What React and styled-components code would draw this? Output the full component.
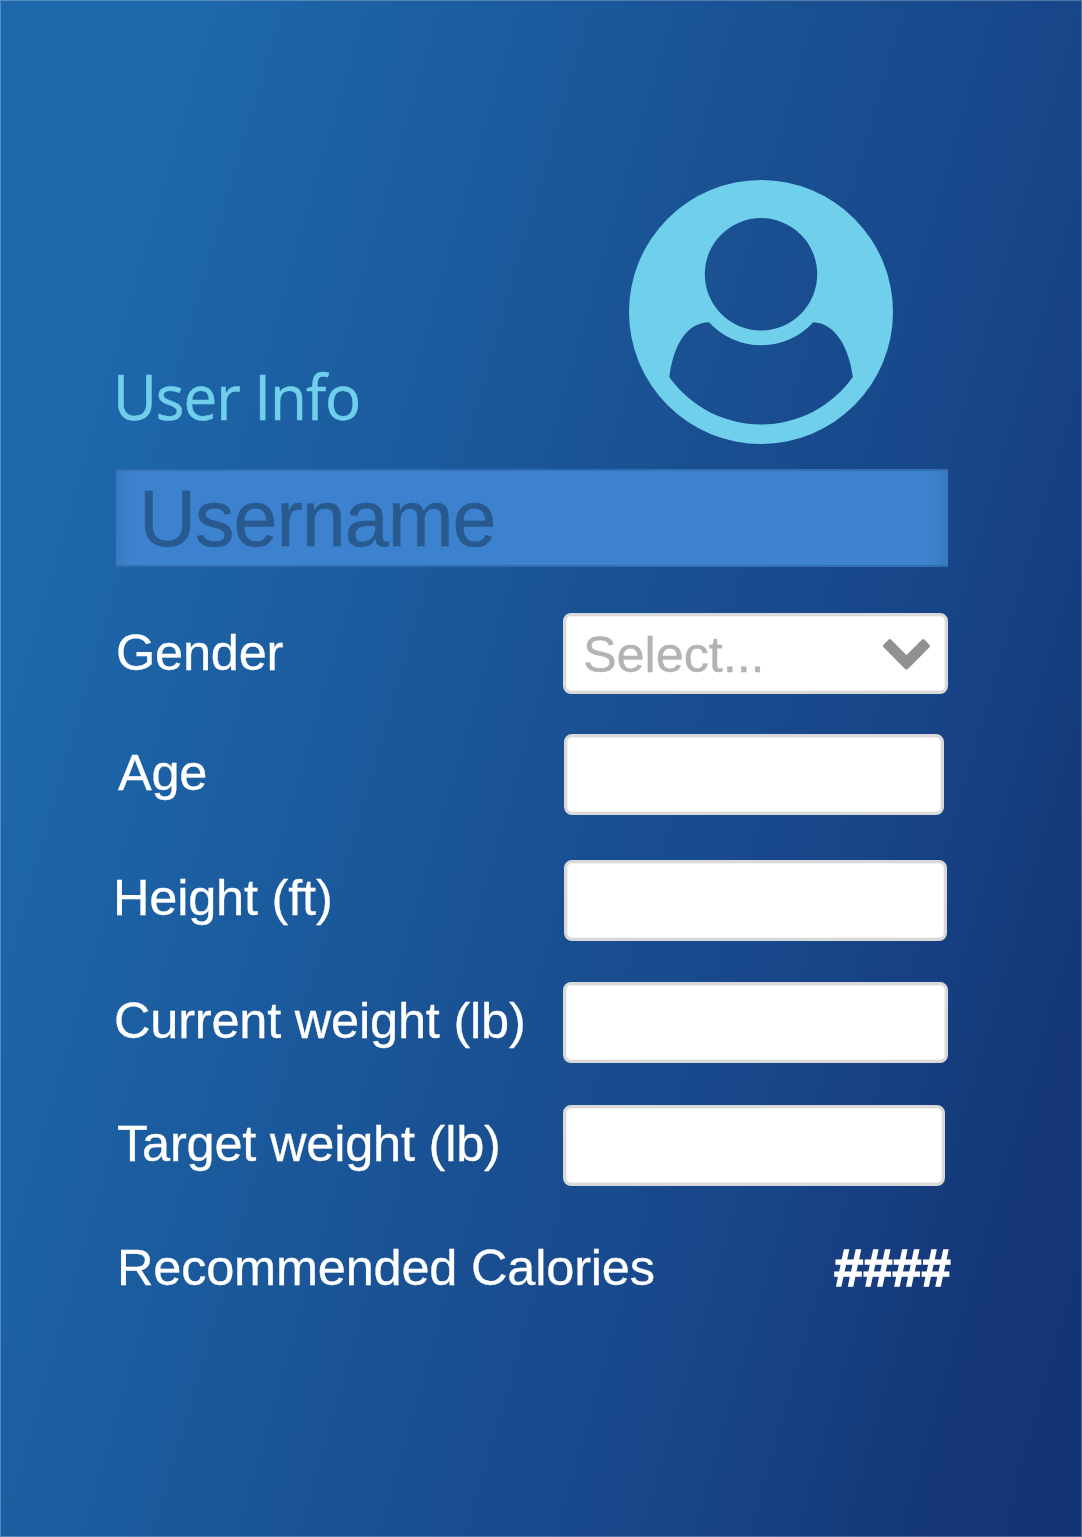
import React from "react";
import styled, { createGlobalStyle } from "styled-components";

const GlobalStyle = createGlobalStyle`
  *, *::before, *::after { box-sizing: border-box; }
  body { margin: 0; }
`;

const Page = styled.main`
  width: 1082px;
  height: 1537px;
  padding: 179px 0 0 115px;
  border: 1px solid rgba(255, 255, 255, 0.25);
  background: linear-gradient(106deg, #1d69ac 0%, #1d69ac 11%, #194f91 55%, #174588 73%, #143676 90%, #143575 100%) border-box;
  font-family: "Liberation Sans", Arial, sans-serif;
  color: #fff;
  overflow: hidden;
`;

const Header = styled.header`
  display: flex;
  align-items: flex-end;
  justify-content: space-between;
  width: 777px;
  height: 264px;
`;

const Title = styled.h1`
  margin: 0 0 8px -3px;
  font: 400 63px/80px "Open Sans", "Noto Sans", sans-serif;
  letter-spacing: -1.1px;
  transform: scaleX(0.955);
  transform-origin: left center;
  -webkit-text-stroke: 0.5px #70cfeb;
  color: #70cfeb;
  white-space: nowrap;
`;

const Username = styled.div`
  display: flex;
  align-items: center;
  width: 832px;
  height: 98px;
  margin-top: 25px;
  padding: 1px 0 0 23px;
  border: solid #326eb2;
  border-width: 2px 0;
  background:
    linear-gradient(90deg, #3a78bc, #3c82ce 14px, #3c82ce calc(100% - 20px), #3b80c8 calc(100% - 12px), #3a78bc);
  font-size: 79px;
  line-height: 93px;
  letter-spacing: -1px;
  -webkit-text-stroke: 0.5px #285a90;
  color: #285a90;
`;

const Row = styled.div`
  display: flex;
  align-items: center;
  width: 836px;
  height: 81px;
  margin-top: ${(p) => p.$gap}px;
`;

const Label = styled.label`
  flex: 0 0 ${(p) => p.$width - p.$indent}px;
  margin-left: ${(p) => p.$indent}px;
  padding-bottom: ${(p) => p.$lift}px;
  font-size: 50.5px;
  line-height: 60px;
  letter-spacing: -0.2px;
  -webkit-text-stroke: 0.3px #fff;
  white-space: nowrap;
`;

const Field = styled.div`
  display: flex;
  align-items: center;
  justify-content: space-between;
  width: ${(p) => p.$width}px;
  height: 81px;
  padding: 0 15px 0 17px;
  border: 3px solid #d9d9da;
  border-radius: 8px;
  background: #fff;
  box-shadow: inset 0 0 0 1px #f3f3f3;
`;

const Placeholder = styled.span`
  padding-top: 3px;
  font-size: 50.5px;
  line-height: 60px;
  letter-spacing: -0.1px;
  -webkit-text-stroke: 0.3px #b3b3b3;
  color: #b3b3b3;
`;

const Calories = styled.output`
  margin: 0 2px 0 auto;
  font-size: 52.5px;
  font-style: italic;
  font-weight: 700;
  line-height: 60px;
  -webkit-text-stroke: 1.4px #fff;
`;

const Avatar = () => (
  <svg width="264" height="264" viewBox="0 0 264 264" aria-hidden="true">
    <path
      fill="#70cfeb"
      fillRule="evenodd"
      d="M132 0A132 132 0 1 1 132 264A132 132 0 1 1 132 0Z
         M132 38.1A56.2 56.2 0 1 0 132 150.5A56.2 56.2 0 1 0 132 38.1Z
         M40.3 197C45 163 58 143 80 142.2A70.3 70.3 0 0 0 184.3 142.2C206 143 220 167 223.8 197A112.4 112.4 0 0 1 40.3 197Z"
    />
  </svg>
);

const ChevronIcon = styled.svg`
  margin-top: 2px;
`;

const Chevron = () => (
  <ChevronIcon width="47" height="31" viewBox="0 0 47 31" aria-hidden="true">
    <path
      fill="#919191"
      stroke="#919191"
      strokeWidth="4"
      strokeLinejoin="round"
      d="M6.8 2.2L23.5 19L40.2 2.2L44.8 7L23.5 28.6L2.2 7Z"
    />
  </ChevronIcon>
);

const fields = [
  { label: "Gender", gap: 46, labelWidth: 447, width: 385, indent: 0, lift: 1, select: true },
  { label: "Age", gap: 40, labelWidth: 448, width: 380, indent: 2, lift: 3 },
  { label: "Height (ft)", gap: 45, labelWidth: 448, width: 383, indent: -3, lift: 5 },
  { label: "Current weight (lb)", gap: 41, labelWidth: 447, width: 385, indent: -2, lift: 3 },
  { label: "Target weight (lb)", gap: 42, labelWidth: 447, width: 382, indent: 1, lift: 3 },
];

export default function App() {
  return (
    <>
      <GlobalStyle />
      <Page>
        <Header>
          <Title>User Info</Title>
          <Avatar />
        </Header>
        <Username>Username</Username>
        {fields.map((f) => (
          <Row key={f.label} $gap={f.gap}>
            <Label $width={f.labelWidth} $indent={f.indent} $lift={f.lift}>
              {f.label}
            </Label>
            <Field $width={f.width}>
              {f.select && (
                <>
                  <Placeholder>Select...</Placeholder>
                  <Chevron />
                </>
              )}
            </Field>
          </Row>
        ))}
        <Row $gap={41}>
          <Label as="span" $width={560} $indent={1} $lift={0}>
            Recommended Calories
          </Label>
          <Calories>####</Calories>
        </Row>
      </Page>
    </>
  );
}
